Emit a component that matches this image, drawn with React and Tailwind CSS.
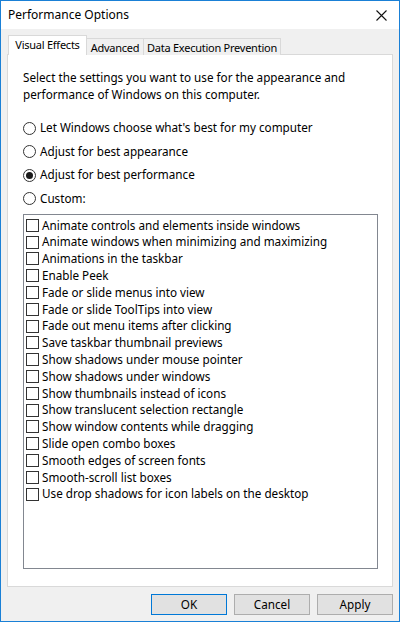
import React from "react";

const items = [
  "Animate controls and elements inside windows",
  "Animate windows when minimizing and maximizing",
  "Animations in the taskbar",
  "Enable Peek",
  "Fade or slide menus into view",
  "Fade or slide ToolTips into view",
  "Fade out menu items after clicking",
  "Save taskbar thumbnail previews",
  "Show shadows under mouse pointer",
  "Show shadows under windows",
  "Show thumbnails instead of icons",
  "Show translucent selection rectangle",
  "Show window contents while dragging",
  "Slide open combo boxes",
  "Smooth edges of screen fonts",
  "Smooth-scroll list boxes",
  "Use drop shadows for icon labels on the desktop",
];

const radios = [
  ["Let Windows choose what's best for my computer", false],
  ["Adjust for best appearance", false],
  ["Adjust for best performance", true],
  ["Custom:", false],
];

function Radio({ checked }) {
  return (
    <span className="w-[13px] h-[13px] rounded-full border border-[#333333] bg-white flex items-center justify-center shrink-0">
      {checked && <span className="w-[7px] h-[7px] rounded-full bg-[#1a1a1a]" />}
    </span>
  );
}

export default function App() {
  return (
    <div
      className="w-[400px] h-[622px] border border-[#1a80d6] bg-[#f0f0f0] flex flex-col text-[11.7px] text-black whitespace-nowrap"
      style={{ fontFamily: '"Noto Sans", "Open Sans", sans-serif' }}
    >
      <div className="h-[28px] bg-white flex items-center justify-between pl-[7px] pr-[12px] shrink-0">
        <span className="text-[12px] leading-none">Performance Options</span>
        <svg width="11" height="11" viewBox="0 0 11 11">
          <path d="M0.5 0.5 L10.5 10.5 M10.5 0.5 L0.5 10.5" stroke="#111" strokeWidth="1.1" fill="none" />
        </svg>
      </div>
      <div className="flex-1 flex flex-col px-[6px] pt-[6px]">
        <div className="flex items-end h-[20px] relative z-10 text-[11px] tracking-[-0.25px]">
          <div className="h-[20px] w-[79px] ml-[1px] bg-white border border-b-0 border-[#d9d9d9] flex items-start justify-center pt-[1px] leading-[16px]">
            Visual Effects
          </div>
          <div className="h-[17px] w-[57px] bg-[#f0f0f0] border border-l-0 border-b-0 border-[#d9d9d9] flex items-center justify-center leading-none pt-[1px]">
            Advanced
          </div>
          <div className="h-[17px] w-[137px] bg-[#f0f0f0] border border-l-0 border-b-0 border-[#d9d9d9] flex items-center justify-center leading-none pt-[1px]">
            Data Execution Prevention
          </div>
        </div>
        <div className="h-[533px] -mt-[1px] bg-white border border-[#d9d9d9] flex flex-col pl-[15px] pr-[14px] pt-[14px]">
          <p className="leading-[17px]">
            Select the settings you want to use for the appearance and
            <br />
            performance of Windows on this computer.
          </p>
          <div className="flex flex-col mt-[17px] gap-[7px]">
            {radios.map(([label, checked]) => (
              <div key={label} className="flex items-center gap-[4px] h-[16.5px]">
                <Radio checked={checked} />
                <span className="leading-none">{label}</span>
              </div>
            ))}
          </div>
          <div className="mt-[7px] w-[355px] h-[355px] border border-[#828790] bg-white pt-[2px] pl-[2px] flex flex-col">
            {items.map((t) => (
              <div key={t} className="flex items-center gap-[3px] h-[16.8px]">
                <span className="w-[13px] h-[13px] border border-[#333333] bg-white shrink-0" />
                <span className="leading-none">{t}</span>
              </div>
            ))}
          </div>
        </div>
        <div className="flex justify-end gap-[7px] mt-[7px]">
          <button className="w-[76px] h-[21px] bg-[#e1e1e1] border border-[#0078d7] leading-none">OK</button>
          <button className="w-[76px] h-[21px] bg-[#e1e1e1] border border-[#adadad] leading-none">Cancel</button>
          <button className="w-[76px] h-[21px] bg-[#e1e1e1] border border-[#adadad] leading-none">Apply</button>
        </div>
      </div>
    </div>
  );
}
